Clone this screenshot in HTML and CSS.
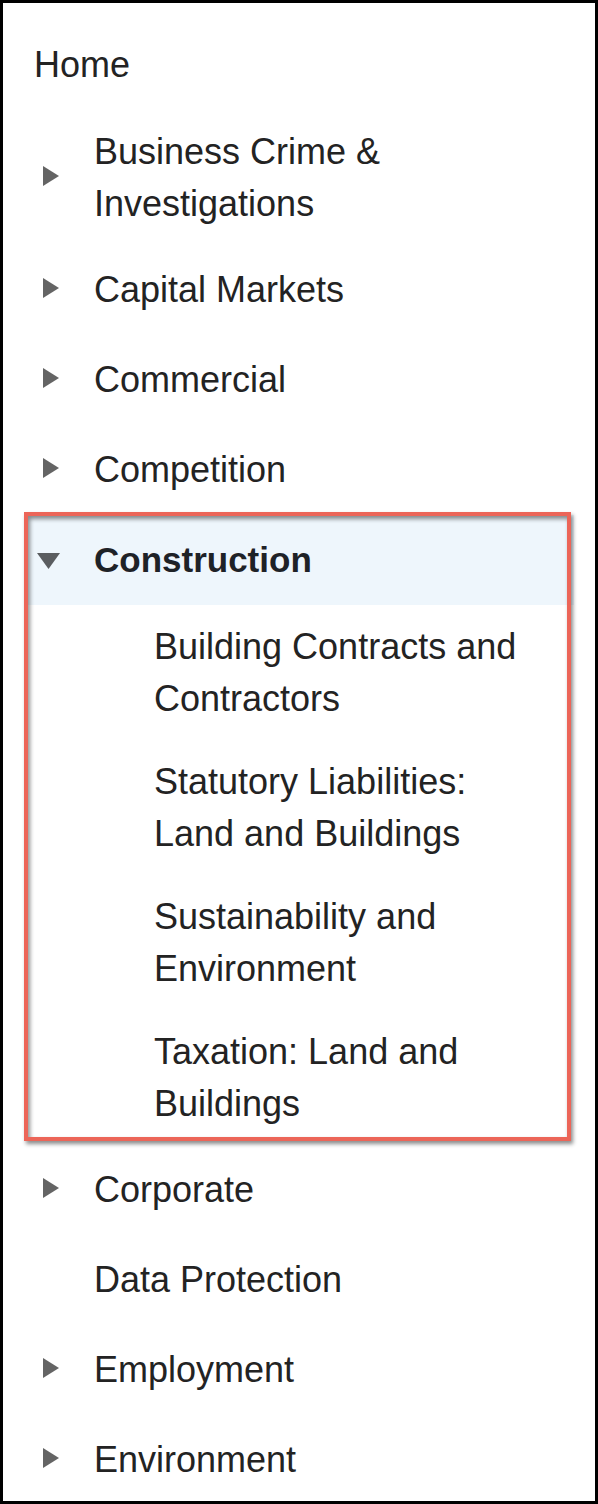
FILE: index.html
```html
<!DOCTYPE html>
<html>
<head>
<meta charset="utf-8">
<link rel="stylesheet" href="styles.css">
</head>
<body>
<div class="frame">
  <ul class="nav">
    <li class="row row-top"><span class="label">Home</span></li>
    <li class="row row-main row-two">
      <span class="caret"><svg width="16" height="20" viewBox="0 0 16 20"><path d="M0 0 L16 10 L0 20 Z" fill="#646464"/></svg></span>
      <span class="label">Business Crime &amp; Investigations</span>
    </li>
    <li class="row row-main">
      <span class="caret"><svg width="16" height="20" viewBox="0 0 16 20"><path d="M0 0 L16 10 L0 20 Z" fill="#646464"/></svg></span>
      <span class="label">Capital Markets</span>
    </li>
    <li class="row row-main">
      <span class="caret"><svg width="16" height="20" viewBox="0 0 16 20"><path d="M0 0 L16 10 L0 20 Z" fill="#646464"/></svg></span>
      <span class="label">Commercial</span>
    </li>
    <li class="row row-main">
      <span class="caret"><svg width="16" height="20" viewBox="0 0 16 20"><path d="M0 0 L16 10 L0 20 Z" fill="#646464"/></svg></span>
      <span class="label">Competition</span>
    </li>
    <li class="group">
      <div class="row row-main row-open">
        <span class="caret caret-down"><svg width="23" height="16" viewBox="0 0 23 16"><path d="M0 0 L23 0 L11.5 16 Z" fill="#5a5d60"/></svg></span>
        <span class="label label-bold">Construction</span>
      </div>
      <ul class="sub">
        <li class="row row-sub row-two"><span class="label">Building Contracts and Contractors</span></li>
        <li class="row row-sub row-two"><span class="label">Statutory Liabilities: Land and Buildings</span></li>
        <li class="row row-sub row-two"><span class="label">Sustainability and Environment</span></li>
        <li class="row row-sub row-two"><span class="label">Taxation: Land and Buildings</span></li>
      </ul>
      <div class="mark"></div>
    </li>
    <li class="row row-main">
      <span class="caret"><svg width="16" height="20" viewBox="0 0 16 20"><path d="M0 0 L16 10 L0 20 Z" fill="#646464"/></svg></span>
      <span class="label">Corporate</span>
    </li>
    <li class="row row-main"><span class="label">Data Protection</span></li>
    <li class="row row-main">
      <span class="caret"><svg width="16" height="20" viewBox="0 0 16 20"><path d="M0 0 L16 10 L0 20 Z" fill="#646464"/></svg></span>
      <span class="label">Employment</span>
    </li>
    <li class="row row-main">
      <span class="caret"><svg width="16" height="20" viewBox="0 0 16 20"><path d="M0 0 L16 10 L0 20 Z" fill="#646464"/></svg></span>
      <span class="label">Environment</span>
    </li>
  </ul>
</div>
</body>
</html>
```
FILE: styles.css
```css
html, body {
  margin: 0;
  padding: 0;
  background: #ffffff;
}
.frame {
  box-sizing: border-box;
  width: 598px;
  height: 1504px;
  border: 3px solid #000000;
  overflow: hidden;
  font-family: "Liberation Sans", Arial, sans-serif;
  font-size: 36px;
  color: #232323;
}
.nav {
  list-style: none;
  margin: 0;
  padding: 17px 21px 0 21px;
}
.sub {
  list-style: none;
  margin: 0;
  padding: 0;
}
.group {
  position: relative;
}
.row {
  position: relative;
  box-sizing: border-box;
  display: flex;
  align-items: center;
  min-height: 90px;
  padding: 15.5px 36px 15.5px 70px;
  line-height: 52px;
}
.row-top {
  padding-left: 10px;
}
.row-sub {
  padding-left: 130px;
}
.row-two {
  min-height: 135px;
}
.row-open {
  background: #eef6fc;
}
.caret {
  position: absolute;
  left: 19px;
  top: 50%;
  width: 16px;
  height: 20px;
  margin-top: -12px;
  display: flex;
}
.caret-down {
  left: 13px;
  width: 23px;
  height: 16px;
  margin-top: -7px;
}
.label {
  display: block;
}
.label-bold {
  font-size: 35px;
  font-weight: 700;
  color: #1e2227;
}
.mark {
  position: absolute;
  left: 0;
  top: -3px;
  width: 547px;
  height: 629px;
  box-sizing: border-box;
  border: 4px solid #ec6558;
  box-shadow: 2px 3px 4px rgba(0, 0, 0, 0.45), inset 2px 3px 4px rgba(0, 0, 0, 0.45);
  pointer-events: none;
}
```
